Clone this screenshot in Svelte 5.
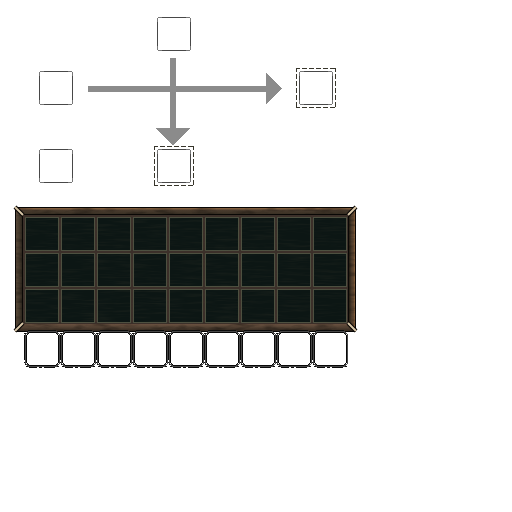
<script>
  const columns = Array.from({ length: 9 }, (_, i) => i);
  const cells = Array.from({ length: 27 }, (_, i) => i);
  const inputs = [
    { name: 'Top input', area: '1 / 3', output: false },
    { name: 'Left input', area: '3 / 1', output: false },
    { name: 'Right output', area: '3 / 5', output: true },
    { name: 'Lower input', area: '5 / 1', output: false },
    { name: 'Lower output', area: '5 / 3', output: true }
  ];
  const corners = [
    [0, 0, 8, 8],
    [341, 0, 333, 8],
    [0, 124, 8, 116],
    [341, 124, 333, 116]
  ];
</script>

<main>
  <section class="flow" aria-label="Slot flow">
    <svg class="across" viewBox="0 0 220 40" shape-rendering="crispEdges" aria-hidden="true">
      <path d="M12 18H190V5L206 21L190 36V24H12Z" fill="#8b8b8b" />
    </svg>
    <svg class="down" viewBox="0 0 40 92" shape-rendering="crispEdges" aria-hidden="true">
      <path d="M16 4H22V74H36L19 92L2 74H16Z" fill="#8b8b8b" />
    </svg>
    {#each inputs as slot}
      <button class="holder" aria-label={slot.name} style:grid-area={slot.area}>
        <svg viewBox="0 0 40 40" fill="none" aria-hidden="true">
          <path d="M4 3.5H36M4 36.5H36M3.5 4V36M36.5 4V36" stroke="#777" />
          <path d="M8 3.5H32M8 36.5H32M3.5 8V32M36.5 8V32" stroke="#484848" />
          {#if slot.output}
            <path d="M0 .5H40M0 39.5H40M.5 0V40M39.5 0V40" stroke="#37352b" stroke-dasharray="5 2" stroke-dashoffset="1" />
          {/if}
        </svg>
      </button>
    {/each}
  </section>

  <section class="panel" aria-label="Inventory">
    <svg class="frame" viewBox="0 0 341 125" preserveAspectRatio="none" aria-hidden="true">
      <defs>
        <linearGradient id="top" x2="0" y2="1">
          <stop offset="0" stop-color="#8c653f" /><stop offset=".2" stop-color="#6d5138" />
          <stop offset=".4" stop-color="#493b2e" /><stop offset="1" stop-color="#3a3125" />
        </linearGradient>
        <linearGradient id="left">
          <stop offset="0" stop-color="#584838" /><stop offset=".5" stop-color="#463b2d" /><stop offset="1" stop-color="#302920" />
        </linearGradient>
        <linearGradient id="right">
          <stop offset="0" stop-color="#261e15" /><stop offset=".4" stop-color="#4b3b2b" />
          <stop offset=".75" stop-color="#604731" /><stop offset="1" stop-color="#93673d" />
        </linearGradient>
        <linearGradient id="bottom" x2="0" y2="1">
          <stop offset="0" stop-color="#6a5140" /><stop offset=".4" stop-color="#564435" /><stop offset="1" stop-color="#32281f" />
        </linearGradient>
        <filter id="grain" x="0" y="0" width="1" height="1" color-interpolation-filters="sRGB">
          <feTurbulence type="fractalNoise" baseFrequency=".05 .2" numOctaves="3" seed="4" />
          <feColorMatrix values="0 0 0 0 .05  0 0 0 0 .04  0 0 0 0 .03  1 0 0 0 -.43" />
        </filter>
        <filter id="weave" x="0" y="0" width="1" height="1" color-interpolation-filters="sRGB">
          <feTurbulence type="fractalNoise" baseFrequency=".03 .5" numOctaves="3" seed="9" />
          <feColorMatrix values="0 0 0 0 .28  0 0 0 0 .26  0 0 0 0 .2  .4 0 0 0 -.18" />
        </filter>
      </defs>
      <rect width="341" height="125" fill="#050403" />
      <path d="M1 1H340L333 7H8Z" fill="url(#top)" />
      <path d="M1 1L7 8V117L1 124Z" fill="url(#left)" />
      <path d="M340 1L334 8V117L340 124Z" fill="url(#right)" />
      <path d="M8 117H333L340 124H1Z" fill="url(#bottom)" />
      <rect width="341" height="125" filter="url(#grain)" />
      <rect x="8" y="8" width="325" height="109" fill="#3b2f29" />
      {#each cells as i}
        <rect x={10.5 + (i % 9) * 36} y={10.5 + Math.floor(i / 9) * 36} width="33" height="33" fill="#0c1614" stroke="#4d5040" />
      {/each}
      <rect x="8" y="8" width="325" height="109" filter="url(#weave)" />
      <path d="M7.5 117V7.5H333.5V117" fill="none" stroke="#090705" />
      {#each corners as [x1, y1, x2, y2]}
        <line {x1} {y1} {x2} {y2} stroke="#060403" stroke-width="4" />
        <line {x1} {y1} {x2} {y2} stroke="#dac8a9" stroke-width="2" />
      {/each}
    </svg>
    <div class="cells">
      {#each cells as i}
        <button aria-label={`Inventory slot ${i + 1}`}></button>
      {/each}
    </div>
  </section>

  <section class="hotbar" aria-label="Hotbar">
    {#each columns as i}
      <button aria-label={`Hotbar slot ${i + 1}`}>
        <svg viewBox="0 0 36 38" fill="none" aria-hidden="true">
          <path d="M4 .5H32M5 37.5H13M15 37.5H18M20 37.5H31M.5 5V30M.5 32V33M.5 3V4M2 1.5H4M32 1.5H34M1 3.5H2M1 34.5H2M2 36.5H4M33 36.5H35" stroke="#0b0b0b" />
          <path d="M4 1.5H33M4 36.5H33M1.5 4V34M35.5 4V34M2 3.5H4M3 2.5H5M32 2.5H34M33 3.5H35M2 34.5H4M3 35.5H5M32 35.5H34M33 34.5H35" stroke="#484848" />
          <path d="M5 2.5H32M5 35.5H32M2.5 5V33M34.5 5V33M3 4.5H4M4 3.5H5M33 4.5H34M32 3.5H33M3 33.5H4M4 34.5H5M33 33.5H34M32 34.5H33" stroke="#080808" />
        </svg>
      </button>
    {/each}
  </section>
</main>

<style>
  :global(body) {
    margin: 0;
    background: #fff;
  }

  main {
    padding: 14px 15px;
    font-family: "Liberation Sans", sans-serif;
  }

  button {
    display: block;
    margin: 0;
    padding: 0;
    border: 0;
    background: transparent;
  }

  svg {
    display: block;
  }

  .flow {
    display: grid;
    grid-template-columns: 40px 78px 40px 102px 40px;
    grid-template-rows: 40px 14px 40px 38px 40px;
    padding-left: 21px;
  }

  .across {
    grid-area: 3 / 2 / 4 / 5;
    width: 100%;
  }

  .down {
    grid-area: 2 / 3 / 5 / 4;
    width: 100%;
  }

  .panel {
    position: relative;
    width: fit-content;
    margin-top: 21px;
    padding: 10px 9px 9px 10px;
  }

  .frame {
    position: absolute;
    inset: 0;
    width: 100%;
    height: 100%;
    overflow: visible;
  }

  .cells {
    position: relative;
    display: grid;
    grid-template-columns: repeat(9, 34px);
    grid-auto-rows: 34px;
    gap: 2px;
  }

  .hotbar {
    position: relative;
    display: flex;
    margin-top: -2px;
    padding-left: 9px;
  }

  .hotbar button {
    width: 36px;
  }
</style>
